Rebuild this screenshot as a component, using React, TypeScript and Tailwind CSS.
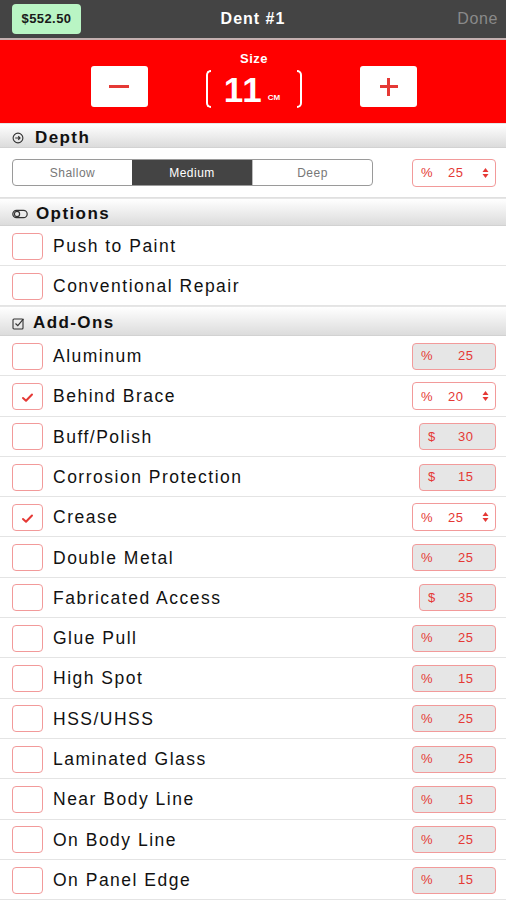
import React from "react";

type Addon = {
  label: string;
  checked?: boolean;
  unit: "%" | "$";
  value: number;
  select?: boolean;
};

const addons: Addon[] = [
  { label: "Aluminum", unit: "%", value: 25 },
  { label: "Behind Brace", checked: true, unit: "%", value: 20, select: true },
  { label: "Buff/Polish", unit: "$", value: 30 },
  { label: "Corrosion Protection", unit: "$", value: 15 },
  { label: "Crease", checked: true, unit: "%", value: 25, select: true },
  { label: "Double Metal", unit: "%", value: 25 },
  { label: "Fabricated Access", unit: "$", value: 35 },
  { label: "Glue Pull", unit: "%", value: 25 },
  { label: "High Spot", unit: "%", value: 15 },
  { label: "HSS/UHSS", unit: "%", value: 25 },
  { label: "Laminated Glass", unit: "%", value: 25 },
  { label: "Near Body Line", unit: "%", value: 15 },
  { label: "On Body Line", unit: "%", value: 25 },
  { label: "On Panel Edge", unit: "%", value: 15 },
];

function Arrows() {
  return (
    <svg width="7" height="12" viewBox="0 0 7 12" className="shrink-0">
      <path d="M3.5 1 L6.5 5 H0.5 Z" fill="#e53935" />
      <path d="M3.5 11 L6.5 7 H0.5 Z" fill="#e53935" />
    </svg>
  );
}

function SelectBox({ value }: { value: number }) {
  return (
    <div className="w-[84px] h-[28px] border border-[#f29a9a] rounded-[4px] bg-white flex items-center pl-[8px] pr-[6px] text-[13px] tracking-[0.5px] text-[#e53935]">
      <span className="w-[27px]">%</span>
      <span className="flex-1">{value}</span>
      <Arrows />
    </div>
  );
}

function ValueBox({ unit, value }: { unit: string; value: number }) {
  const wide = unit === "%";
  return (
    <div
      className={
        (wide ? "w-[84px] pl-[8px] " : "w-[77px] pl-[8px] ") +
        "h-[27px] border border-[#f29a9a] rounded-[4px] bg-[#e6e6e6] flex items-center text-[13px] tracking-[0.5px] text-[#e53935]"
      }
    >
      <span className={wide ? "w-[37px]" : "w-[30px]"}>{unit}</span>
      <span>{value}</span>
    </div>
  );
}

function Checkbox({ checked }: { checked?: boolean }) {
  return (
    <div className="w-[31px] h-[27px] border border-[#f29a9a] rounded-[4px] bg-white flex items-center justify-center shrink-0">
      {checked && (
        <svg width="13" height="11" viewBox="0 0 13 11" className="mt-[2px]">
          <path d="M2 6 L5 8.8 L11 2.5" fill="none" stroke="#e53935" strokeWidth="2" strokeLinecap="round" strokeLinejoin="round" />
        </svg>
      )}
    </div>
  );
}

function SectionHeader({ icon, title, h, gap }: { icon: React.ReactNode; title: string; h: string; gap: string }) {
  return (
    <div className={h + " flex items-center pl-[12px] pt-[4px] bg-gradient-to-b from-white to-[#dcdcdc] border-t border-[#e6e6e6] border-b border-b-[#d2d2d2]"}>
      {icon}
      <span className={gap + " text-[17px] font-bold text-[#111] tracking-[1.4px]"}>{title}</span>
    </div>
  );
}

function Row({ children, h = "h-[40.3px]" }: { children: React.ReactNode; h?: string }) {
  return <div className={h + " flex items-center pl-[12px] pr-[10px] pt-[1px] bg-white border-b border-[#e4e4e4]"}>{children}</div>;
}

function Label({ text }: { text: string }) {
  return <span className="ml-[10px] text-[17.5px] text-[#111] tracking-[1.5px]">{text}</span>;
}

export default function App() {
  return (
    <div className="w-[506px] h-[900px] overflow-hidden bg-white" style={{ fontFamily: '"Liberation Sans", Arial, sans-serif' }}>
      {/* Nav bar */}
      <div className="h-[40px] bg-[#444444] border-b-2 border-[#c4b0b0] grid grid-cols-[1fr_auto_1fr] items-center px-[12px]">
        <div className="h-[30px] w-[69px] rounded-[4px] bg-[#b9f5c4] flex items-center justify-center text-[13px] font-bold tracking-[0.4px] text-[#1a1a1a]">
          $552.50
        </div>
        <div className="text-white font-bold text-[16px] tracking-[1px]">Dent #1</div>
        <div className="justify-self-end text-[#8a8a8a] text-[16px] tracking-[0.6px] mr-[-4px]">Done</div>
      </div>

      {/* Size stepper */}
      <div className="h-[83px] bg-[#ff0000] flex flex-col items-center pt-[12px]">
        <div className="text-white text-[13px] leading-[14px] font-semibold tracking-[0.5px] pl-[2px]">Size</div>
        <div className="flex items-start mt-[-2px] gap-[58px] pl-[2px]">
          <div className="mt-[2px] w-[57px] h-[41px] bg-white rounded-[3px] flex items-center justify-center">
            <div className="w-[20px] h-[3px] bg-[#e53935]" />
          </div>
          <div className="flex items-center mt-[6px]">
            <div className="w-[5px] h-[38px] border-l-2 border-y-2 border-white rounded-l-[5px]" />
            <div className="flex items-end pl-[13px] pr-[17px] pt-[2px]">
              <span className="text-white font-bold text-[35px] leading-[34px] tracking-[1px]">11</span>
              <span className="text-white font-bold text-[8px] ml-[5px] mb-[3px]">CM</span>
            </div>
            <div className="w-[5px] h-[38px] border-r-2 border-y-2 border-white rounded-r-[5px]" />
          </div>
          <div className="mt-[2px] w-[57px] h-[41px] bg-white rounded-[3px] flex items-center justify-center relative">
            <div className="w-[18px] h-[3px] bg-[#e53935]" />
            <div className="absolute w-[3px] h-[18px] bg-[#e53935]" />
          </div>
        </div>
      </div>

      {/* Depth */}
      <SectionHeader
        h="h-[25px]"
        gap="ml-[11px]"
        title="Depth"
        icon={
          <svg width="12" height="12" viewBox="0 0 13 13">
            <circle cx="6.5" cy="6.5" r="5.3" fill="none" stroke="#333" strokeWidth="1.2" />
            <path d="M3.5 6.5 H8.5 M6.8 4.6 L8.7 6.5 L6.8 8.4" fill="none" stroke="#333" strokeWidth="1.2" />
          </svg>
        }
      />
      <div className="h-[50px] flex items-center pl-[12px] pr-[10px] bg-white border-b border-[#e0e0e0]">
        <div className="w-[361px] h-[27px] border border-[#9a9a9a] rounded-[4px] flex overflow-hidden text-[12px] tracking-[0.5px]">
          <div className="flex-1 flex items-center justify-center text-[#777]">Shallow</div>
          <div className="w-[120px] flex items-center justify-center bg-[#444] text-white">Medium</div>
          <div className="flex-1 flex items-center justify-center text-[#777] border-l border-[#bbb]">Deep</div>
        </div>
        <div className="ml-auto">
          <SelectBox value={25} />
        </div>
      </div>

      {/* Options */}
      <SectionHeader
        h="h-[28px]"
        gap="ml-[8px]"
        title="Options"
        icon={
          <svg width="16" height="10" viewBox="0 0 16 10">
            <rect x="0.8" y="1.3" width="14.4" height="7.4" rx="3.7" fill="none" stroke="#333" strokeWidth="1.2" />
            <circle cx="5" cy="5" r="2.6" fill="none" stroke="#333" strokeWidth="1.2" />
          </svg>
        }
      />
      <Row h="h-[40px]">
        <Checkbox />
        <Label text="Push to Paint" />
      </Row>
      <Row h="h-[40px]">
        <Checkbox />
        <Label text="Conventional Repair" />
      </Row>

      {/* Add-Ons */}
      <SectionHeader
        h="h-[30px]"
        gap="ml-[8px]"
        title="Add-Ons"
        icon={
          <svg width="13" height="13" viewBox="0 0 13 13">
            <rect x="1" y="2" width="10" height="10" rx="1" fill="none" stroke="#333" strokeWidth="1.1" />
            <path d="M3.5 6.5 L5.8 8.6 L11.5 1.8" fill="none" stroke="#333" strokeWidth="1.2" />
          </svg>
        }
      />
      {addons.map((a) => (
        <Row key={a.label}>
          <Checkbox checked={a.checked} />
          <Label text={a.label} />
          <div className="ml-auto">
            {a.select ? <SelectBox value={a.value} /> : <ValueBox unit={a.unit} value={a.value} />}
          </div>
        </Row>
      ))}
    </div>
  );
}
